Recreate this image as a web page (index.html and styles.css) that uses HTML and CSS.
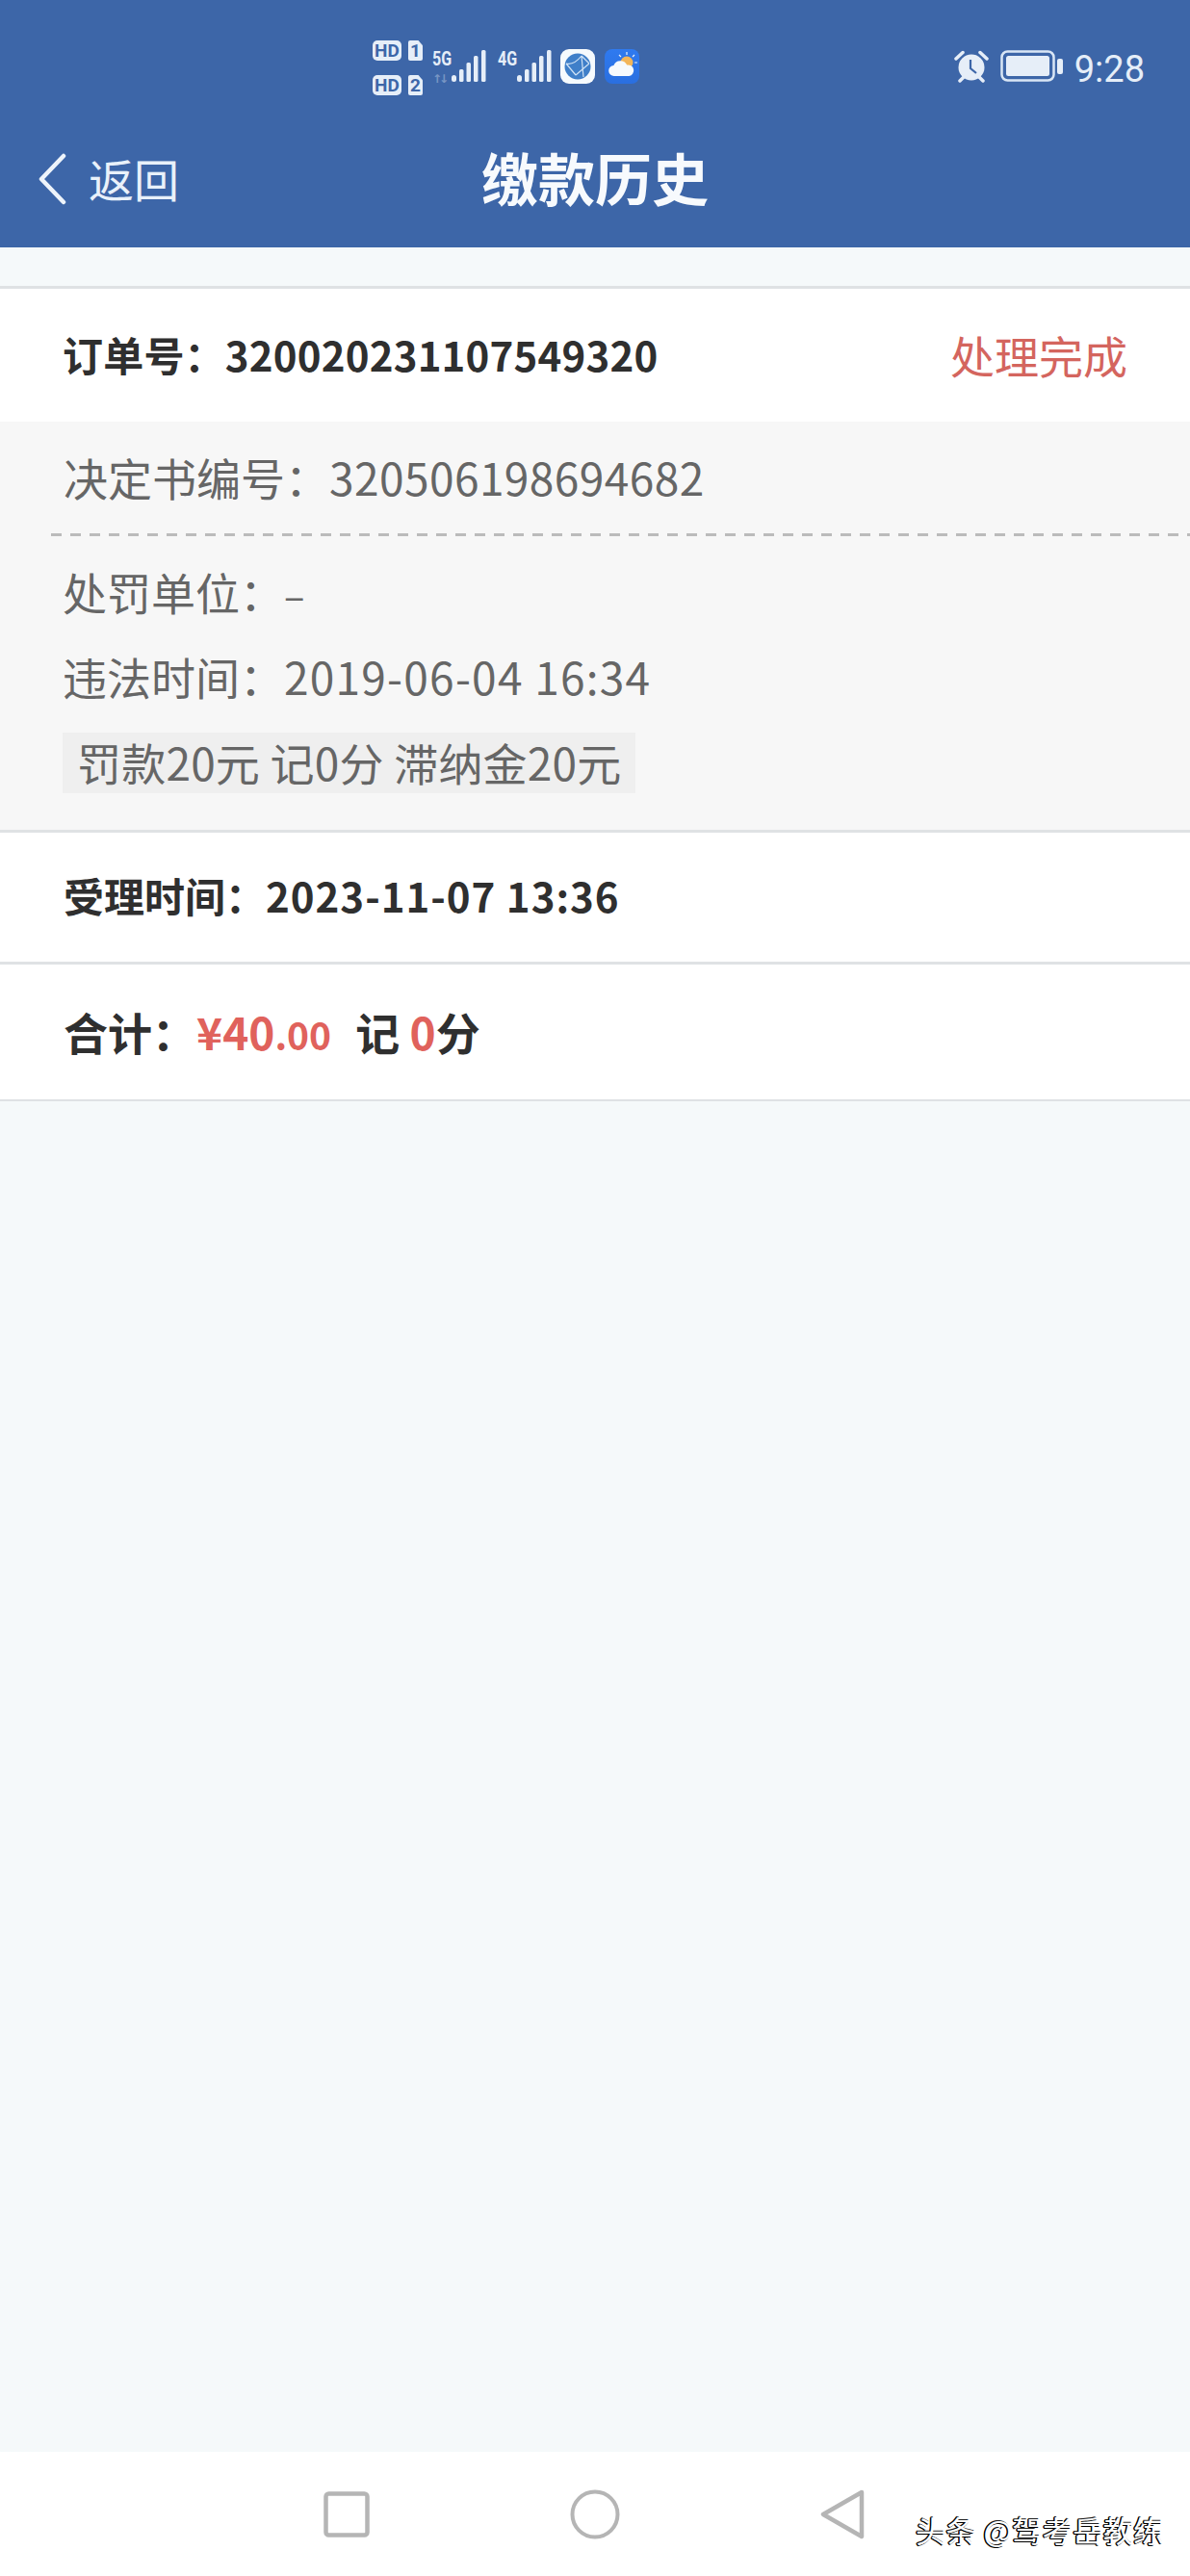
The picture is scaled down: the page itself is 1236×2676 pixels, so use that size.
FILE: index.html
```html
<!DOCTYPE html>
<html lang="zh-CN">
<head>
<meta charset="utf-8">
<title>缴款历史</title>
<link rel="stylesheet" href="styles.css">
</head>
<body>
<header class="header">
  <div class="status">
    <div class="status-left">
      <div class="sims">
        <div class="sim"><span class="hd">HD</span><span class="card">1</span></div>
        <div class="sim"><span class="hd">HD</span><span class="card">2</span></div>
      </div>
      <div class="net net-first">
        <span class="net-label">5G</span>
        <span class="arrows">↑↓</span>
      </div>
      <svg class="bars" viewBox="0 0 36 34"><g fill="#e6eef8"><rect x="0" y="26" width="5" height="7" rx="2.5"/><rect x="8" y="20" width="4.5" height="13" rx="1.5"/><rect x="15.500" y="13" width="4.5" height="20" rx="1.500"/><rect x="23" y="6" width="4.5" height="27" rx="1.500"/><rect x="31" y="0" width="4.500" height="33" rx="1.500"/></g></svg>
      <div class="net net-second"><span class="net-label">4G</span></div>
      <svg class="bars" viewBox="0 0 36 34"><g fill="#e6eef8"><rect x="0" y="26" width="5" height="7" rx="2.5"/><rect x="8" y="20" width="4.5" height="13" rx="1.5"/><rect x="15.500" y="13" width="4.5" height="20" rx="1.500"/><rect x="23" y="6" width="4.5" height="27" rx="1.500"/><rect x="31" y="0" width="4.500" height="33" rx="1.500"/></g></svg>
      <svg class="app app-browser" viewBox="0 0 36 36">
        <rect width="36" height="36" rx="9" fill="#f6fafd"/>
        <circle cx="18" cy="18" r="13.500" fill="#3f7fc9"/>
        <path d="M6 15 Q14 17 22 7 M6 15 L16 27 M22 7 L24 29 M16 27 L30 15 M22 7 L30 15" fill="none" stroke="#cfe2f5" stroke-width="1.200"/>
      </svg>
      <svg class="app app-weather" viewBox="0 0 36 36">
        <defs><linearGradient id="sky" x1="0" y1="0" x2="0" y2="1"><stop offset="0" stop-color="#2f7af0"/><stop offset="1" stop-color="#2a6fe0"/></linearGradient></defs>
        <rect width="36" height="36" rx="8" fill="url(#sky)"/>
        <circle cx="23" cy="14" r="6.500" fill="#f3b65a"/>
        <path d="M23 3v3M31 6l-2 2M34 14h-3M15 6l2 2" stroke="#e8f0fb" stroke-width="1.200" fill="none"/>
        <path d="M10 28a5.500 5.500 0 0 1-.6-11 7.500 7.500 0 0 1 13.800-.5 5.800 5.800 0 0 1 2.300 11.500z" fill="#f7fafd"/>
      </svg>
    </div>
    <div class="status-right">
      <svg class="alarm" viewBox="0 0 36 34">
        <circle cx="18" cy="18" r="13.500" fill="#e6eef8"/>
        <path d="M17 10v9l6 5" fill="none" stroke="#3d66a8" stroke-width="2.200"/>
        <path d="M2 9 L9 2.500 M34 9 L27 2.500 M6 32l4-4M30 32l-4-4" stroke="#e6eef8" stroke-width="3.500" stroke-linecap="round"/>
      </svg>
      <svg class="battery" viewBox="0 0 66 34">
        <rect x="1.500" y="1.500" width="54" height="30" rx="6" fill="none" stroke="#d9e6f5" stroke-width="2.500"/>
        <rect x="6" y="6" width="45" height="21" rx="2.500" fill="#e6eef8"/>
        <rect x="59" y="9" width="6" height="16" rx="2" fill="#e6eef8"/>
      </svg>
      <span class="clock">9:28</span>
    </div>
  </div>
  <div class="nav-title">
    <div class="back">
      <svg class="chevron" viewBox="0 0 32 54"><path d="M28 3 L5 27 L28 51" fill="none" stroke="#eef4fb" stroke-width="4.500" stroke-linecap="round" stroke-linejoin="round"/></svg>
      <span class="back-text">返回</span>
    </div>
    <h1 class="title">缴款历史</h1>
  </div>
</header>

<main class="main">
  <section class="order-row row-bordered">
    <span class="strong order-no">订单号：320020231107549320</span>
    <span class="state">处理完成</span>
  </section>
  <section class="details">
    <div class="detail-head">决定书编号：<span class="num-wide">320506198694682</span></div>
    <div class="detail-dash"></div>
    <div class="detail-body">
      <div class="detail-line">处罚单位：<span class="dash-value">–</span></div>
      <div class="detail-line">违法时间：<span class="num-wider">2019-06-04 16:34</span></div>
      <div class="chip">罚款20元 记0分 滞纳金20元</div>
    </div>
  </section>
  <section class="info-row row-bordered">
    <span class="strong">受理时间：<span class="date">2023-11-07 13:36</span></span>
  </section>
  <section class="total-row row-bordered">
    <span class="strong total">合计：<span class="money">¥40<span class="cents">.00</span></span><span class="points">记 <span class="red">0</span>分</span></span>
  </section>
</main>

<footer class="softkeys">
  <svg class="key" viewBox="0 0 48 52"><rect x="2.500" y="4.500" width="43" height="43" rx="3" fill="none" stroke="#b5b5b5" stroke-width="4.500"/></svg>
  <svg class="key" viewBox="0 0 52 52"><circle cx="26" cy="26" r="23.500" fill="none" stroke="#b5b5b5" stroke-width="4"/></svg>
  <svg class="key" viewBox="0 0 46 52"><path d="M43 3 L3 26 L43 49 Z" fill="none" stroke="#b5b5b5" stroke-width="4.500" stroke-linejoin="round"/></svg>
  <span class="watermark">头条 @驾考岳教练</span>
</footer>
</body>
</html>
```

FILE: styles.css
```css
* { box-sizing: border-box; }
html, body { margin: 0; padding: 0; }
body {
  width: 1236px;
  height: 2676px;
  display: flex;
  flex-direction: column;
  background: #f5f9fa;
  font-family: "Noto Sans CJK SC", "Noto Sans", sans-serif;
  overflow: hidden;
}
.header { height: 257px; background: #3d66a8; color: #f2f6fb; flex: none; }
.status {
  height: 110px;
  padding: 40px 47px 0 387px;
  display: flex;
  justify-content: space-between;
  align-items: flex-start;
}
.status-left { display: flex; align-items: flex-start; }
.sims { display: flex; flex-direction: column; gap: 15px; margin-top: 2px; }
.sim { display: flex; gap: 7px; }
.hd, .card {
  height: 21px;
  background: #e6eef8;
  color: #3d66a8;
  font: 700 19px/21px "Roboto", sans-serif;
  text-align: center;
}
.hd { width: 30px; border-radius: 5px; }
.card { width: 15px; clip-path: polygon(0 0, 70% 0, 100% 25%, 100% 100%, 0 100%); border-radius: 2px; }
.net { display: flex; flex-direction: column; width: 20px; margin-top: 12px; color: #e6eef8; }
.net-first { margin-left: 10px; }
.net-second { margin-left: 12px; }
.net-label { font: 700 20px/18px "Roboto", sans-serif; transform: scaleX(.8); transform-origin: left; white-space: nowrap; }
.arrows { font: 700 12px/12px "DejaVu Sans", sans-serif; opacity: .35; margin-top: 6px; letter-spacing: -3px; }
.bars { width: 36px; height: 34px; margin-top: 12px; flex: none; }
.app { width: 36px; height: 36px; margin-top: 11px; flex: none; }
.app-browser { margin-left: 9px; }
.app-weather { margin-left: 10px; }
.status-right { display: flex; align-items: flex-start; }
.alarm { width: 36px; height: 34px; margin-top: 12px; }
.battery { width: 66px; height: 34px; margin: 12px 0 0 12px; }
.clock { font: 400 38px/46px "Roboto", sans-serif; margin: 9px 0 0 11px; color: #e6eef8; }
.nav-title { height: 147px; position: relative; display: flex; align-items: flex-start; justify-content: center; }
.back { position: absolute; left: 37px; top: 49px; display: flex; align-items: center; color: #e9f1fa; }
.chevron { width: 34px; height: 54px; }
.back-text { font-size: 47px; line-height: 54px; margin-left: 21px; margin-top: -3px; }
.title { margin: 41px 0 0; font-size: 59px; line-height: 66px; font-weight: 700; color: #f7fafd; }
.main { flex: 1; padding-top: 40px; }
.row-bordered { background: #fff; border-top: 3px solid #dfe2e4; }
.strong { font-size: 42px; font-weight: 700; color: #2f2f2f; }
.order-no { letter-spacing: .2px; margin-left: -1px; }
.order-row {
  height: 141px;
  padding: 0 65px 3px 66px;
  display: flex;
  justify-content: space-between;
  align-items: center;
}
.state { font-size: 46px; color: #d4655e; }
.details { background: #f7f7f7; height: 424px; color: #666; font-size: 46px; }
.detail-head {
  height: 116px;
  padding-left: 66px;
  line-height: 114px;
}
.num-wide { letter-spacing: .45px; }
.num-wider { letter-spacing: 1.25px; }
.dash-value { font-size: 40px; }
.detail-dash {
  height: 3px;
  margin-left: 53px;
  background: repeating-linear-gradient(90deg, #bbb 0 11px, transparent 11px 20px);
}
.detail-body { padding: 14px 0 0 65px; }
.detail-line { line-height: 86px; height: 88px; }
.chip {
  margin: 14px 0 0 0;
  width: 595px;
  height: 63px;
  padding-left: 15px;
  line-height: 60px;
  background: #efefef;
  letter-spacing: .2px;
  white-space: nowrap;
}
.info-row {
  height: 137px;
  padding: 0 0 6px 66px;
  display: flex;
  align-items: center;
}
.date { letter-spacing: 1px; }
.total-row {
  height: 145px;
  padding: 0 0 3px 66px;
  display: flex;
  align-items: center;
  border-bottom: 2px solid #dfe2e4;
}
.total { font-size: 46px; }
.money { color: #e0625c; }
.cents { font-size: 39px; }
.points { margin-left: 25px; }
.red { color: #e0625c; }
.softkeys {
  position: relative;
  flex: none;
  height: 129px;
  background: #fff;
  padding-left: 336px;
  display: flex;
  align-items: center;
  gap: 208px;
}
.key { height: 52px; width: auto; flex: none; }
.watermark {
  position: absolute;
  left: 951px;
  top: 61px;
  font-size: 31px;
  line-height: 40px;
  letter-spacing: .5px;
  color: #fff;
  text-shadow: -1px 1px 0 #000, -1.5px 0 0 #000, -1px -1px 0 #222;
  white-space: nowrap;
}
```
